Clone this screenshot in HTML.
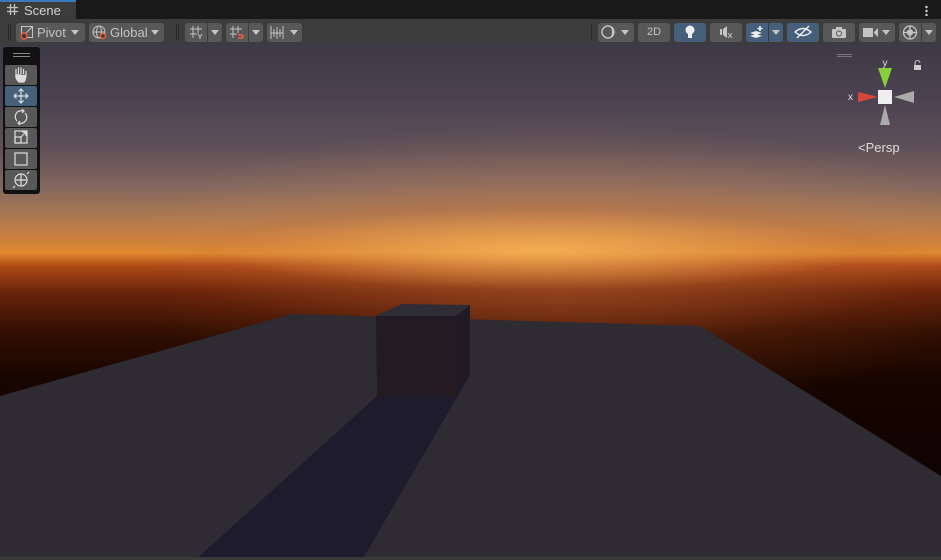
<!DOCTYPE html>
<html><head><style>
*{margin:0;padding:0;box-sizing:border-box}
body{width:941px;height:560px;overflow:hidden;background:#191919;font-family:"Liberation Sans",sans-serif;font-size:12px;color:#c4c4c4;position:relative}
.tabbar{position:absolute;left:0;top:0;width:941px;height:19px;background:#191919}
.tab{position:absolute;left:0;top:0;width:76px;height:19px;background:#3c3c3c;border-top:2px solid #3a79bb;padding-left:24px;line-height:17px;font-size:13px;color:#d2d2d2}
.tb{position:absolute;left:0;top:19px;width:941px;height:25px;background:#3c3c3c}
.b{position:absolute;top:23px;height:19px;background:#585858;border-radius:3px}
.blue{background:#46607c}
.sep{position:absolute;top:24px;width:1px;height:16px;background:#2a2a2a}
.arr{position:absolute;width:0;height:0;border-left:4px solid transparent;border-right:4px solid transparent;border-top:5px solid #c4c4c4}
.view{position:absolute;left:0;top:44px;width:941px;height:516px;background:linear-gradient(180deg,#3e3946 0%,#4a4250 10%,#5e5058 20%,#85685e 28%,#b07a50 34%,#d0803a 38.5%,#e08a30 40.5%,#b04a18 43%,#6a240a 48%,#300e02 56%,#160500 66%,#0a0200 100%)}
.glow{position:absolute;left:0;top:44px;width:941px;height:516px;background:radial-gradient(ellipse 330px 40px at 540px 206px,rgba(255,190,90,.75),rgba(255,160,60,0) 100%),radial-gradient(ellipse 420px 110px at 560px 190px,rgba(230,150,90,.35),rgba(0,0,0,0) 100%),radial-gradient(ellipse 420px 120px at 560px 250px,rgba(150,60,20,.5),rgba(0,0,0,0) 100%)}
.tools{position:absolute;left:3px;top:47px;width:37px;height:147px;background:#111;border-radius:3px}
.tl{position:absolute;left:5px;width:32px;height:20px;background:#585858;border-radius:2px}
</style></head><body>
<div class="tabbar"></div>
<div class="tab">Scene</div>
<svg style="position:absolute;left:7px;top:4px" width="11" height="11" viewBox="0 0 11 11" stroke="#c4c4c4" stroke-width="1.3"><path d="M3.5 0V11M7.5 0V11M0 3.5H11M0 7.5H11"/></svg>
<div style="position:absolute;left:925px;top:5px;width:3px;height:11px;background:radial-gradient(circle,#ccc 1px,transparent 1.5px) 0 0/3px 4px"></div>
<div class="tb"></div>
<div class="sep" style="left:8px"></div><div class="sep" style="left:10px"></div>
<div class="b" style="left:16px;width:69px"></div>
<svg style="position:absolute;left:20px;top:25px" width="15" height="15"><rect x="1.5" y="1.5" width="11" height="11" fill="none" stroke="#c4c4c4"/><path d="M2 12L12 2" stroke="#c4c4c4"/><circle cx="4" cy="11" r="3" fill="#3c3c3c" stroke="#f0603a" stroke-width="1.4"/></svg>
<div style="position:absolute;left:37px;top:25px;font-size:13px">Pivot</div><div class="arr" style="left:71px;top:30px"></div>
<div class="b" style="left:89px;width:75px"></div>
<svg style="position:absolute;left:92px;top:25px" width="15" height="15" fill="none" stroke="#c4c4c4"><circle cx="7" cy="7" r="6"/><ellipse cx="7" cy="7" rx="2.5" ry="6"/><path d="M1 7H13"/><circle cx="11" cy="11" r="2.5" fill="#3c3c3c" stroke="#f0603a" stroke-width="1.4"/></svg>
<div style="position:absolute;left:110px;top:25px;font-size:13px">Global</div><div class="arr" style="left:151px;top:30px"></div>
<div class="sep" style="left:176px"></div><div class="sep" style="left:178px"></div>
<div class="b" style="left:185px;width:22px;border-radius:3px 0 0 3px"></div><div class="b" style="left:208px;width:14px;border-radius:0 3px 3px 0"></div><div class="arr" style="left:211px;top:30px"></div>
<svg style="position:absolute;left:189px;top:25px" width="15" height="15" stroke="#c4c4c4" fill="none"><path d="M4 1V13M9 1V8M1 4H13M1 9H8M9 9L11 12L13 9M11 12V14"/></svg>
<div class="b" style="left:226px;width:22px;border-radius:3px 0 0 3px"></div><div class="b" style="left:249px;width:14px;border-radius:0 3px 3px 0"></div><div class="arr" style="left:252px;top:30px"></div>
<svg style="position:absolute;left:229px;top:25px" width="15" height="15" fill="none"><path d="M4 1V13M9 1V8M1 4H13M1 9H8" stroke="#c4c4c4"/><path d="M9 10H12.5A1.5 1.5 0 0 1 12.5 13H9" stroke="#f0603a" stroke-width="1.6"/></svg>
<div class="b" style="left:267px;width:35px"></div><div class="arr" style="left:290px;top:30px"></div>
<svg style="position:absolute;left:270px;top:25px" width="16" height="15" stroke="#c4c4c4"><path d="M1 1V14M4 4V12M7 2V14M10 4V12M13 1V14M1 8H13"/></svg>
<div class="sep" style="left:591px"></div>
<div class="b" style="left:598px;width:36px"></div><svg style="position:absolute;left:601px;top:25px" width="14" height="14"><circle cx="7" cy="7" r="6" fill="none" stroke="#c4c4c4" stroke-width="1.4"/><path d="M7 13A6 6 0 0 0 7 1A4 6 0 0 1 7 13" fill="#c4c4c4"/></svg><div class="arr" style="left:621px;top:30px"></div>
<div class="b" style="left:638px;width:32px;text-align:center;line-height:19px;font-size:11px">2D</div>
<div class="b blue" style="left:674px;width:32px"></div><svg style="position:absolute;left:684px;top:25px" width="12" height="15"><circle cx="6" cy="5" r="4.5" fill="#eee"/><rect x="4" y="9" width="4" height="4" fill="#eee"/></svg>
<div class="b" style="left:710px;width:32px"></div><svg style="position:absolute;left:720px;top:26px" width="14" height="13" fill="#c4c4c4"><rect x="0" y="3" width="2" height="6"/><path d="M3 3L7 0V12L3 9Z"/><path d="M8 7L12 12M12 7L8 12" stroke="#c4c4c4"/></svg>
<div class="b blue" style="left:746px;width:22px;border-radius:3px 0 0 3px"></div><div class="b blue" style="left:769px;width:14px;border-radius:0 3px 3px 0"></div><div class="arr" style="left:772px;top:30px"></div>
<svg style="position:absolute;left:749px;top:25px" width="16" height="15" fill="#eee"><path d="M1 8L7 6L13 8L7 10Z"/><path d="M1 11L7 9L13 11L7 13Z"/><path d="M11 1V6M8.5 3.5H13.5" stroke="#eee" stroke-width="1.5"/></svg>
<div class="b blue" style="left:787px;width:32px"></div><svg style="position:absolute;left:794px;top:25px" width="18" height="15" fill="none" stroke="#eee" stroke-width="1.4"><path d="M1 7Q9 0 17 7Q9 14 1 7Z"/><path d="M3 13L15 1"/></svg>
<div class="b" style="left:823px;width:32px"></div><svg style="position:absolute;left:831px;top:26px" width="16" height="13"><rect x="1" y="3" width="14" height="9" rx="1" fill="#c4c4c4"/><rect x="5" y="1" width="6" height="3" fill="#c4c4c4"/><circle cx="8" cy="7.5" r="3" fill="#585858"/><circle cx="8" cy="7.5" r="2" fill="#c4c4c4"/></svg>
<div class="b" style="left:859px;width:36px"></div><svg style="position:absolute;left:863px;top:27px" width="16" height="11" fill="#c4c4c4"><rect x="0" y="1" width="10" height="9"/><path d="M11 5L15 1V10L11 6Z"/></svg><div class="arr" style="left:882px;top:30px"></div>
<div class="b" style="left:899px;width:22px;border-radius:3px 0 0 3px"></div><div class="b" style="left:922px;width:14px;border-radius:0 3px 3px 0"></div><div class="arr" style="left:925px;top:30px"></div>
<svg style="position:absolute;left:902px;top:25px" width="16" height="15" fill="none" stroke="#c4c4c4" stroke-width="1.3"><circle cx="8" cy="7.5" r="6.5"/><path d="M1.5 7.5H14.5M8 1V14"/><circle cx="8" cy="7.5" r="2.5" fill="#c4c4c4"/></svg>

<div class="view"></div>
<div class="glow"></div>
<svg style="position:absolute;left:0;top:44px" width="941" height="516">
<polygon points="0,352 292,270 700,282 941,432 941,516 0,516" fill="#2e2b33"/>
<polygon points="195,516 377,352 456,353 470,331 362,516" fill="#1d1b2c"/>
<polygon points="376,272 456,272 456,353 377,352" fill="#241a22"/>
<polygon points="375,272 402,260 470,261 456,272" fill="#302c36"/>
<polygon points="456,272 470,261 470,331 456,353" fill="#201a25"/>
</svg>
<div style="position:absolute;left:0;top:557px;width:941px;height:3px;background:#3a3a3a"></div>

<div class="tools"></div>
<div style="position:absolute;left:13px;top:53px;width:17px;height:4px;border-top:1px solid #888;border-bottom:1px solid #888"></div>
<div class="tl" style="top:65px"></div><div class="tl blue" style="top:86px;background:#46607c"></div><div class="tl" style="top:107px"></div><div class="tl" style="top:128px"></div><div class="tl" style="top:149px"></div><div class="tl" style="top:170px"></div>
<svg style="position:absolute;left:5px;top:65px" width="32" height="126" fill="none" stroke="#ddd" stroke-width="1.2">
<path d="M11 9V4M13.5 9V2.5M16 9V2.5M18.5 9V4M21 10V6M11 9Q10 14 14 17H19Q21 14 21 10" fill="#ddd"/>
<path d="M16 24V38M9 31H23M13.5 26.5L16 24L18.5 26.5M13.5 35.5L16 38L18.5 35.5M11.5 28.5L9 31L11.5 33.5M20.5 28.5L23 31L20.5 33.5"/>
<path d="M12 56A6 6 0 0 1 18 46M20 48A6 6 0 0 1 14 58M17 44L19 46L17 48M15 60L13 58L15 56"/>
<rect x="10" y="66" width="12" height="12"/><rect x="10" y="72" width="6" height="6"/><path d="M15 73L21 67M17 67H21V71"/>
<rect x="10" y="88" width="12" height="12"/>
<circle cx="16" cy="115" r="6"/><path d="M10 115H22M16 109V121M10 121L8 123M22 109L24 107"/>
</svg>

<div style="position:absolute;left:837px;top:54px;width:15px;height:3px;border-top:1px solid #777;border-bottom:1px solid #777"></div>
<svg style="position:absolute;left:845px;top:55px" width="80" height="75">
<text x="40" y="11" fill="#ddd" font-size="10" font-family="Liberation Sans" text-anchor="middle">y</text>
<path d="M33 13L47 13L40 33Z" fill="#8acd3a"/>
<path d="M13 37L13 47L33 42Z" fill="#d9473a"/>
<text x="3" y="45" fill="#ddd" font-size="10" font-family="Liberation Sans">x</text>
<path d="M69 36L69 48L49 42Z" fill="#aaa"/>
<path d="M35 70L45 70L40 50Z" fill="#aaa"/>
<rect x="33" y="35" width="14" height="14" fill="#eee"/>
<rect x="69" y="10" width="7" height="5" fill="#ccc"/><path d="M70 10V8A2.5 2.5 0 0 1 75 8" stroke="#ccc" fill="none"/>
</svg>
<div style="position:absolute;left:858px;top:140px;font-size:13px;color:#ddd">&lt;Persp</div>
</body></html>
